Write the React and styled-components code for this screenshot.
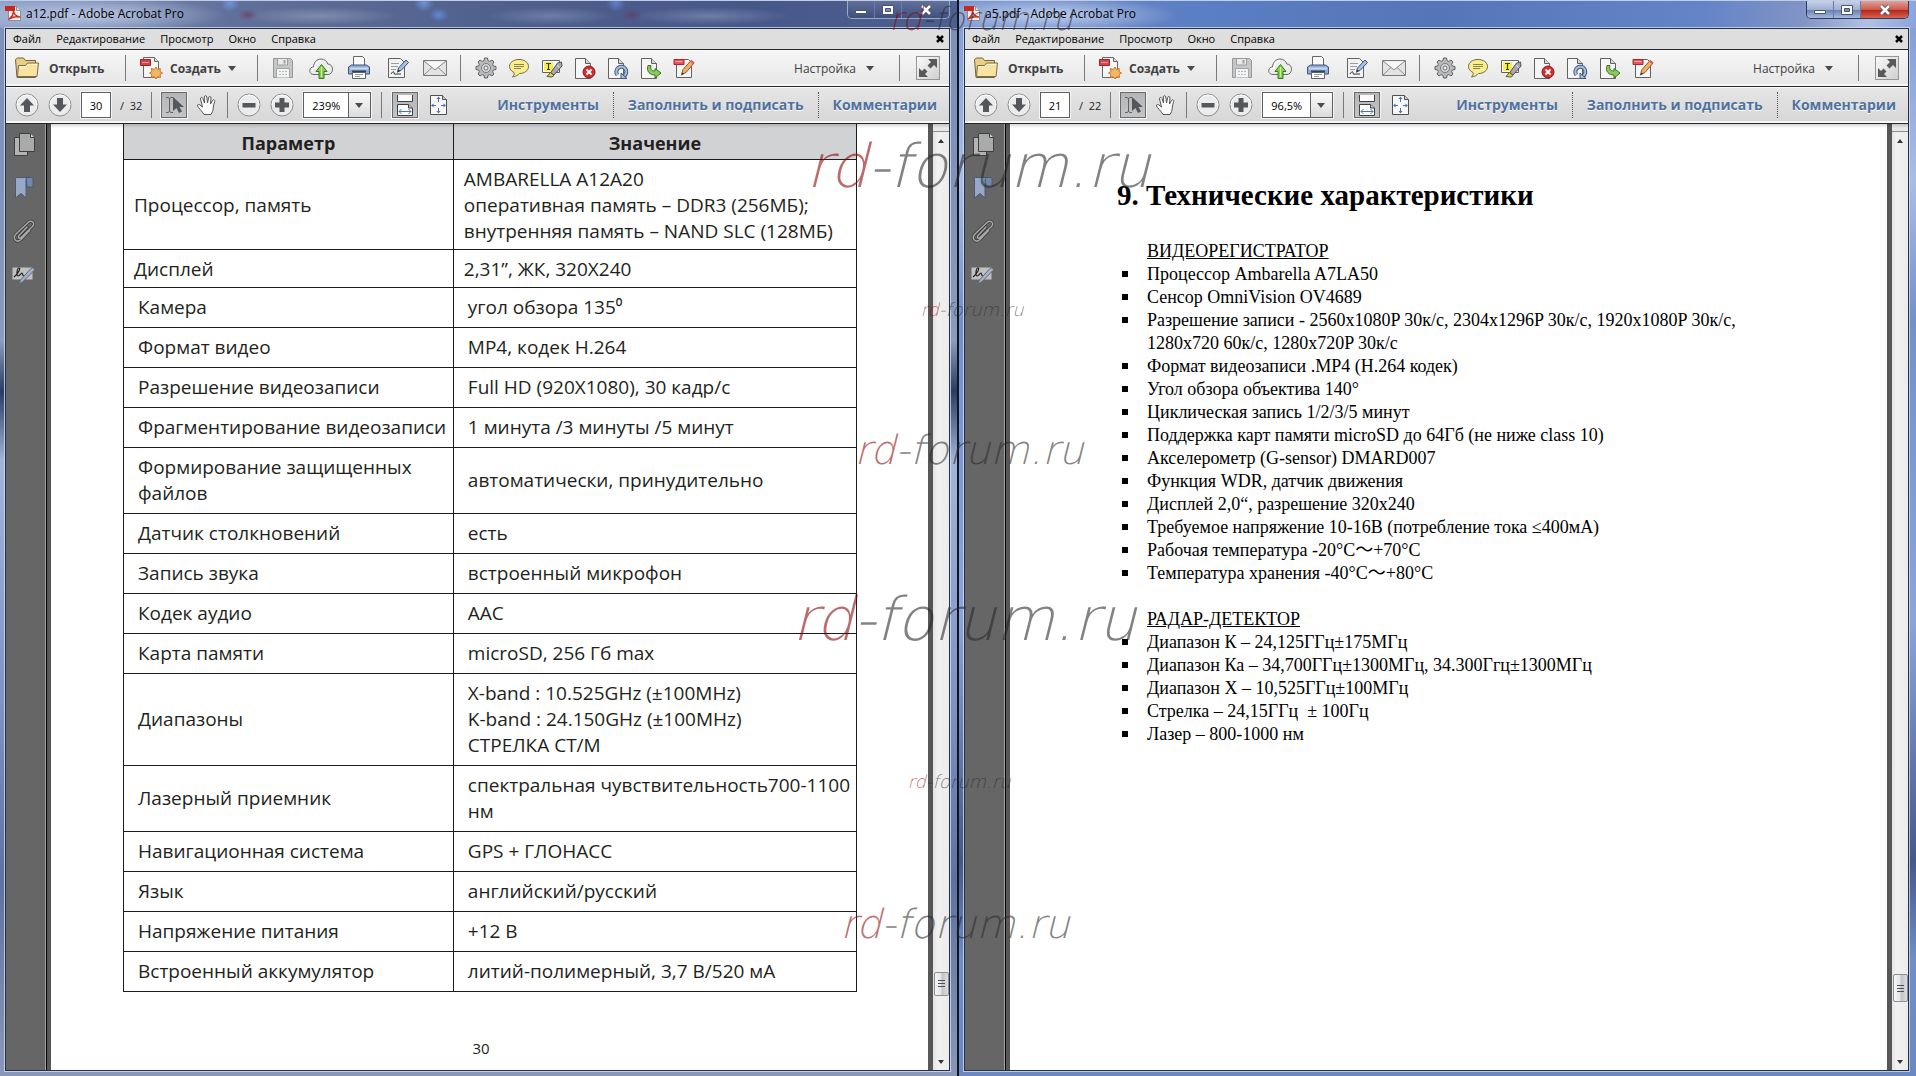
import React, { useState } from "react";
import styled, { createGlobalStyle, css } from "styled-components";

const UI_FONT = `"Open Sans", "Noto Sans", sans-serif`;

const GlobalStyle = createGlobalStyle`
  * {
    box-sizing: border-box;
  }

  body {
    margin: 0;
    background: #14141f;
    font-family: ${UI_FONT};
  }

  button, input, select {
    font-family: inherit;
    margin: 0;
  }

  svg {
    display: block;
    flex: none;
  }
`;

const Desktop = styled.div`
  position: relative;
  display: flex;
  gap: 2px;
  min-height: 100vh;
  overflow: hidden;
  background: #14141f;
`;

const Window = styled.section`
  flex: 1;
  min-width: 0;
  display: flex;
  flex-direction: column;
  padding: 0 7px 5px 5px;
  border-top: 1px solid #c3cde2;
  background: ${({ $active }) =>
    $active
      ? "linear-gradient(#7e9ad6 0, #a9bde4 180px, #7390cc 320px, #8aa5dc 620px, #46588a 860px, #6f8fcb 960px, #6a88c2)"
      : "linear-gradient(#7f90b8 0, #8192ba 180px, #8b9bbb 340px, #2b3c64 390px, #a3b4da 460px, #7e93c4 700px, #5f719f 880px, #8a97b8)"};
`;

const TitleBar = styled.header`
  display: flex;
  align-items: center;
  gap: 5px;
  height: 27px;
  margin: 0 -7px 0 -5px;
  padding: 0 7px 2px 5px;
  color: #000;
  background: ${({ $active }) =>
    $active
      ? "radial-gradient(ellipse 130px 18px at 90px 14px, rgba(205, 218, 243, 0.85), rgba(205, 218, 243, 0) 100%), linear-gradient(90deg, #7d97cf, #5d7fc3 22%, #5476b9 50%, #6484c8 78%, #8094c4 88%, #b2c0e2 95%, #8ba4dc)"
      : "radial-gradient(ellipse 140px 18px at 85px 14px, rgba(190, 203, 230, 0.95), rgba(190, 203, 230, 0) 100%), radial-gradient(ellipse 10px 9px at 230px 2px, #6f92dc, transparent), radial-gradient(ellipse 10px 9px at 424px 2px, #6f92dc, transparent), radial-gradient(ellipse 10px 9px at 616px 2px, #5f80c8, transparent), radial-gradient(ellipse 10px 7px at 439px 14px, #5f88d8, transparent), radial-gradient(ellipse 10px 6px at 248px 14px, #6b4a70, transparent), radial-gradient(ellipse 10px 6px at 632px 14px, #5f4470, transparent), radial-gradient(ellipse 80px 9px at 318px 15px, #7f8cab, transparent), radial-gradient(ellipse 64px 9px at 550px 15px, #6e7ea8, transparent), radial-gradient(ellipse 80px 9px at 710px 15px, #6e7ea8, transparent), linear-gradient(90deg, #8da0c8, #61709a 24%, #4e5f8c 55%, #46578a 78%, #4d5f8f)"};
`;

const Title = styled.h1`
  flex: 1;
  margin: 0;
  font-size: 12px;
  font-weight: 400;
  line-height: 16px;
`;

const Caption = styled.div`
  display: flex;
  align-self: flex-start;
  height: 18px;
  border: 1px solid ${({ $active }) => ($active ? "#2f3c5f" : "#9aa8c8")};
  border-top: 0;
  border-radius: 0 0 5px 5px;
  overflow: hidden;
`;

const CaptionButton = styled.button`
  display: flex;
  align-items: center;
  justify-content: center;
  width: ${({ $wide }) => ($wide ? "47px" : "27px")};
  padding: 0;
  border: 0;
  border-right: ${({ $wide }) => ($wide ? "0" : "1px solid #6b7aa0")};
  background: ${({ $active, $wide }) =>
    (!$active && "linear-gradient(rgba(255,255,255,.12), rgba(20,30,60,.2))") ||
    ($wide && "linear-gradient(#e0a29a, #cf5a4c 50%, #b3281c 55%, #d9644f)") ||
    "linear-gradient(#c6d1e8, #9fafd3 50%, #6c83b5 55%, #a5b8de)"};
`;

const Frame = styled.div`
  flex: 1;
  display: flex;
  flex-direction: column;
  border: 1px solid #262f4a;
  box-shadow: 0 0 0 1px rgba(214, 226, 246, 0.75);
`;

const MenuBar = styled.nav`
  display: flex;
  align-items: center;
  gap: 15px;
  height: 21px;
  padding: 0 5px 0 7px;
  background: #dedede;
  border-bottom: 1px solid #26282b;
`;

const MenuItem = styled.button`
  padding: 0;
  border: 0;
  background: none;
  color: #000;
  font-size: 11px;
  line-height: 18px;
`;

const CloseDocument = styled(MenuItem)`
  margin-left: auto;
`;

const Toolbar = styled.div`
  display: flex;
  align-items: center;
  gap: ${({ $gap }) => $gap || "0"};
  height: 37px;
  padding: 0 9px;
  color: #3d3d3d;
  border-bottom: 1px solid #26282b;
  background: ${({ $dark }) =>
    $dark
      ? "linear-gradient(#e6e6e6, #d6d6d6)"
      : "linear-gradient(#f6f6f6, #e6e6e6)"};
  box-shadow: inset 0 -2px 0 #f7f7f7, inset 0 1px 0 #fafafa;
`;

const IconGroup = styled.div`
  display: flex;
  gap: ${({ $gap }) => $gap};
`;

const IconButton = styled.button`
  display: flex;
  align-items: center;
  justify-content: center;
  flex: none;
  width: ${({ $width }) => $width || "24px"};
  height: 26px;
  padding: 0;
  border: 0;
  background: none;
  ${({ $pressed }) =>
    $pressed &&
    css`
      width: 26px;
      border: 1px solid #67696b;
      background: linear-gradient(#b4b5b7, #c4c5c7);
      box-shadow: 0 0 0 1px #f4f4f4;
    `}
  ${({ $boxed }) =>
    $boxed &&
    css`
      height: 24px;
      border: 1px solid #969696;
      background: linear-gradient(135deg, #fafafa, #cfcfcf);
    `}
`;

const TextButton = styled.button`
  display: flex;
  align-items: center;
  gap: ${({ $gap }) => $gap || "8px"};
  min-width: ${({ $width }) => $width || "auto"};
  height: 26px;
  padding: 0;
  border: 0;
  background: none;
  color: #404040;
  font-size: 12px;
  font-weight: ${({ $bold }) => ($bold ? 700 : 400)};
`;

const Separator = styled.span`
  flex: none;
  width: 1px;
  height: 26px;
  margin: 0 ${({ $space }) => $space || "13px"};
  background: #77797b;
`;

const Spacer = styled.span`
  flex: 1;
`;

const PageInput = styled.input`
  width: 30px;
  height: 26px;
  padding: 0;
  border: 1px solid #5d6063;
  background: #fff;
  box-shadow: 0 0 0 1px #f4f4f4;
  color: #000;
  font-size: 11px;
  text-align: center;
`;

const PageCount = styled.span`
  color: #222;
  font-size: 11px;
  white-space: pre;
`;

const ZoomField = styled.span`
  position: relative;
  display: flex;
  border: 1px solid #5d6063;
  box-shadow: 0 0 0 1px #f4f4f4;
  background: linear-gradient(#fafafa, #dcdcdc);

  svg {
    position: absolute;
    right: 7px;
    top: 10px;
    pointer-events: none;
  }
`;

const ZoomSelect = styled.select`
  appearance: none;
  height: 24px;
  padding: 0 30px 0 8px;
  border: 0;
  border-radius: 0;
  background: linear-gradient(#5d6063, #5d6063) right 21px top 0 / 1px 100%
      no-repeat,
    linear-gradient(90deg, #fff, #fff) left / calc(100% - 21px) 100% no-repeat;
  color: #000;
  font-size: 11px;
`;

const Panes = styled.div`
  display: flex;
  align-items: center;
  margin-left: auto;
`;

const PaneLink = styled.a`
  padding: 3px 14px;
  line-height: 20px;
  color: #4f71a0;
  font-size: 14px;
  font-weight: 700;
  text-decoration: none;
  white-space: nowrap;
  text-shadow: 0 1px 0 #fff;
  border-left: 1px dotted #555;

  &:first-child {
    border-left: 0;
  }

  &:last-child {
    padding-right: 3px;
  }
`;

const Workspace = styled.div`
  position: relative;
  flex: 1;
  display: flex;

  &::before {
    content: "";
    position: absolute;
    inset: 0 0 auto 40px;
    height: 4px;
    background: linear-gradient(rgba(0, 0, 0, 0.16), rgba(0, 0, 0, 0));
  }
`;

const SidePanel = styled.aside`
  display: flex;
  flex-direction: column;
  gap: 19px;
  width: 41px;
  padding: 9px 0 0 6px;
  background: #666;
  border-right: 1px solid #000;
  box-shadow: inset -1px 0 0 #a3a3a3;

  button {
    height: 24px;
  }
`;

const PageArea = styled.main`
  flex: 1;
  display: flex;
  padding: 0 5px 0 4px;
  background: #575757;
`;

const Page = styled.article`
  flex: 1;
  background: #fff;
`;

const ManualPage = styled(Page)`
  padding: 0 71px 0 72px;
`;

const SpecTable = styled.table`
  width: 100%;
  table-layout: fixed;
  border-collapse: collapse;
  color: #231f20;
  font-family: ${UI_FONT};
  font-size: 19px;
  line-height: 26px;

  th,
  td {
    border: 1px solid #1c1c1e;
    text-align: left;
    font-weight: 400;
    white-space: pre-line;
  }

  col:first-child {
    width: 45%;
  }

  thead th {
    padding: 6px 0 3px;
    border-top: 0;
    background: #d1d2d4;
    font-size: 18px;
    text-align: center;
    font-weight: 700;
  }
`;

const SpecRow = styled.tr`
  th,
  td {
    padding: ${({ $tight }) => ($tight ? "6px 0 5px 10px" : "6px 0 7px 14px")};
  }
`;

const PageNumber = styled.p`
  margin: 46px 18px 0 0;
  color: #231f20;
  font-size: 15px;
  line-height: 20px;
  text-align: center;
`;

const FeaturesPage = styled(Page)`
  padding: 55px 40px 0 107px;
  color: #000;
  font-family: "Liberation Serif", "Noto Sans CJK SC", serif;
  font-size: 18px;
  line-height: 23px;
`;

const ChapterTitle = styled.h2`
  margin: 0 0 29px;
  font-size: 29px;
  line-height: 32px;
`;

const SectionTitle = styled.h3`
  margin: 0 0 0 30px;
  font-size: 18px;
  font-weight: 400;
  text-decoration: underline;
`;

const FeatureList = styled.ul`
  margin: 0 0 23px;
  padding: 0;
  list-style: none;

  li {
    display: flex;
    gap: 19px;
    padding-left: 5px;
    white-space: pre-line;
  }

  li::before {
    content: "";
    flex: none;
    width: 6px;
    height: 6px;
    margin-top: 8px;
    background: #000;
  }
`;

const Scrollbar = styled.div`
  display: flex;
  flex-direction: column;
  align-items: center;
  width: 16px;
  background: linear-gradient(90deg, #e3e3e3, #f1f1f1 30%, #ebebeb);
`;

const SplitHandle = styled.span`
  align-self: stretch;
  height: 8px;
  margin-bottom: 1px;
  background: #e8e8e8;
  border-bottom: 1px solid #8e8e8e;
`;

const ScrollButton = styled.button`
  display: flex;
  align-items: center;
  justify-content: center;
  width: 16px;
  height: 16px;
  padding: 0;
  border: 0;
  background: none;
`;

const Track = styled.span`
  flex: ${({ $grow }) => $grow};
`;

const Thumb = styled.span`
  display: flex;
  align-items: center;
  justify-content: center;
  width: 15px;
  height: ${({ $size }) => $size};
  border: 1px solid #8b8d90;
  border-radius: 2px;
  background: linear-gradient(90deg, #f7f7f7, #e4e5e6 45%, #c2c4c8 55%, #dcdde0);
`;

const Watermark = styled.span`
  position: absolute;
  left: calc(50% + ${({ $shift }) => $shift});
  top: ${({ $top }) => $top};
  transform: translateX(-50%);
  color: rgba(40, 40, 42, 0.58);
  font-family: "DejaVu Sans Light", "DejaVu Sans", sans-serif;
  font-size: ${({ $size }) => $size};
  font-style: italic;
  line-height: 1.2;
  white-space: nowrap;
  pointer-events: none;

  em {
    color: rgba(140, 0, 0, 0.58);
  }
`;

const Icon = ({ w = 24, h = 24, children }) => (
  <svg
    width={w}
    height={h}
    viewBox={`0 0 ${w} ${h}`}
    fill="none"
    strokeLinejoin="round"
    aria-hidden="true"
  >
    {children}
  </svg>
);

const Caret = () => (
  <Icon w={8} h={5}>
    <path d="M0 0h8L4 5z" fill="#4a4a4a" />
  </Icon>
);

const PdfLogo = () => (
  <Icon w={16} h={17}>
    <path d="M3.5 1.5h8l4 4v10h-12z" fill="#f4f1f0" stroke="#8d8d8d" />
    <path d="M11.500 1.500v4h4" fill="#ddd" stroke="#8d8d8d" />
    <path d="M0 1h10v5H0z" fill="#c9281f" />
    <path
      d="M4 14c3-2 4.500-5 4.500-8 .5 3 2 5 6 6-3-.6-7 0-10.500 2z"
      stroke="#cf2a20"
      strokeWidth="1.500"
    />
  </Icon>
);

const FolderIcon = () => (
  <Icon>
    <path d="M.5 3.500l2-1.500h6l2 2.500h10v17H2z" fill="#e9cf83" stroke="#6f6448" />
    <path d="M2.500 20.500l1-11h7l2-2.500h11l-1.500 13.500z" fill="#f8e3a3" stroke="#7b6d49" />
    <path d="M4.500 11h6.500l2-2.500h9" stroke="#fff5cf" />
  </Icon>
);

const CreateIcon = () => (
  <Icon>
    <path d="M4.500 1.500h11l4 4v16h-15z" fill="#f7f7f7" stroke="#666" />
    <path d="M15.500 1.500v4h4" fill="#ddd" stroke="#666" />
    <path d="M1.500 3.500h10v6h-10z" fill="#d8434a" stroke="#a32029" />
    <path d="M3 6.500h7" stroke="#ec9498" />
    <path
      d="M17 11l1.500 2.500 2.800-1-.3 3 2.500 1.500-2.500 1.500.5 3-3-.7L17 23l-1.700-2.300-3 .8.6-3-2.400-1.500 2.500-1.500-.7-3 3 .9z"
      fill="#f5b566"
      stroke="#c17a2c"
    />
  </Icon>
);

const SaveIcon = () => (
  <Icon>
    <path d="M2.500 2.500h17l2 2v17h-19z" fill="#c5c6c8" stroke="#97989a" />
    <path d="M6.500 3v6h10V3" fill="#e9e9ea" stroke="#9c9d9f" />
    <path d="M12.500 4h2v3.500h-2z" fill="#a2a3a5" />
    <path d="M5.500 21.500v-9h13v9" fill="#f3f3f3" stroke="#a5a6a8" />
    <path d="M8 15.500h8M8 18.500h8" stroke="#b9babc" strokeDasharray="2 1" />
  </Icon>
);

const CloudIcon = () => (
  <Icon>
    <path
      d="M5 18.500C1.500 18.500.5 16 .8 14c.3-2 2-3.200 3.700-3C4.500 6.500 8 3 12 3c3.500 0 6 2.200 6.800 5 3 0 4.700 2.500 4.700 5.200 0 3-2 5.300-4.500 5.300z"
      fill="#ececec"
      stroke="#68696b"
    />
    <path d="M3 15c0-2 1-3 3-2.500C6 8 9 5 12 5" stroke="#fff" strokeWidth="1.500" />
    <path d="M12.500 8.500l5.500 7h-3v7H10v-7H7z" fill="#8bd14c" stroke="#38761d" />
    <path d="M12.500 11v10" stroke="#c8f09e" />
  </Icon>
);

const PrinterIcon = () => (
  <Icon>
    <path d="M6.500 9.500v-9h9l2 2v7" fill="#fafafa" stroke="#666" />
    <path d="M1.500 11l3-2h15l3 2v7h-21z" fill="#8fa9d2" stroke="#3f577f" />
    <path d="M3 12.500h18" stroke="#c9d8ef" strokeWidth="2" />
    <path d="M5 15.500h14" stroke="#2f4263" strokeWidth="2" />
    <path d="M5.500 16.500h13v6h-13z" fill="#fff" stroke="#5d6063" />
    <path d="M8 18.500h8M8 20.500h5" stroke="#9a9b9d" />
  </Icon>
);

const SignIcon = () => (
  <Icon>
    <path d="M3.500 2.500h12l4 4v15h-16z" fill="#f2f2f2" stroke="#5f6163" />
    <path d="M6 7.500h8M6 10.500h7M6 13.500h5" stroke="#9a9b9d" />
    <path d="M6 18c2-3 3-3 3-1s2 1 3 1h4" stroke="#333" />
    <path d="M12.500 15.500l1-3.500 7.500-8 2.500 2.500-7.500 8z" fill="#a8c0e3" stroke="#3a5078" />
    <path d="M12 17l1.500-3.500 1.500 1.500z" fill="#333" />
  </Icon>
);

const MailIcon = () => (
  <Icon>
    <path d="M.5 4.500h23v15H.5z" fill="#e4e4e5" stroke="#77787a" />
    <path d="M2.500 5.500h19L12 13z" fill="#f7f7f7" />
    <path d="M1 5l11 9 11-9M1 19l8-7.500M23 19l-8-7.500" stroke="#8a8b8d" />
  </Icon>
);

const GearIcon = () => (
  <Icon>
    <path
      d="M10.500 3h3l.5 2.600 1.800.8L18 5l2 2-1.400 2.200.8 1.800 2.600.5v3l-2.600.5-.8 1.800L20 19l-2 2-2.200-1.400-1.800.8-.5 2.600h-3l-.5-2.600-1.800-.8L6 21l-2-2 1.400-2.200-.8-1.800L2 14.500v-3l2.600-.5.8-1.800L4 7l2-2 2.200 1.400 1.800-.8z"
      fill="#b9babc"
      stroke="#5f6163"
      transform="translate(0 -1)"
    />
    <circle cx="12" cy="12" r="4.500" fill="#d9dadb" stroke="#77787a" />
    <circle cx="12" cy="12" r="2" fill="#f4f4f4" stroke="#6a6b6d" />
  </Icon>
);

const CommentIcon = () => (
  <Icon>
    <path
      d="M12 3.500c5.500 0 9.500 3 9.500 7s-4 7-9 7c-1.500 1.500-3.500 3-7 3.500 1.500-1.500 2-3 1.500-4.500-2.700-1.200-4.500-3.500-4.500-6 0-4 4-7 9.500-7z"
      fill="#fbec8c"
      stroke="#6f6b4c"
    />
    <path d="M7 8.500h10M7 10.500h10M7 12.500h7" stroke="#8b8350" />
  </Icon>
);

const HighlightIcon = () => (
  <Icon>
    <path d="M2.500 4.500h17v12h-17z" fill="#fff" stroke="#5f6163" />
    <path d="M4 6h9v9H4z" fill="#f8ee4e" />
    <path d="M6 7.500h5M8.500 7.500v6M7 13.500h3" stroke="#3c3c20" strokeWidth="1.200" />
    <path d="M10.500 17l7-10 4-1 .5 4-8 9z" fill="#a7a9ac" stroke="#4d4f51" />
    <path d="M17 9.500l2.500 2" stroke="#e3e3e3" />
    <path d="M7 20.500l3.500-4 3.500 3-2 1.500z" fill="#e5d64b" stroke="#5c5626" />
  </Icon>
);

const BlankPage = () => (
  <g transform="translate(-1 1)">
    <path d="M3.500 1.500h10l5 5v15h-15z" fill="#f6f6f6" stroke="#5f6163" />
    <path d="M13.500 1.500v5h5" fill="#d5d6d8" stroke="#5f6163" />
  </g>
);

const DeletePageIcon = () => (
  <Icon>
    <BlankPage />
    <circle cx="16" cy="16" r="6" fill="#cf2f2f" stroke="#8e1717" />
    <path d="M13.500 13.500l5 5M18.500 13.500l-5 5" stroke="#fff" strokeWidth="1.800" />
  </Icon>
);

const RotatePageIcon = () => (
  <Icon>
    <BlankPage />
    <path d="M11.500 19a5 5 0 1 1 6.500 1" stroke="#41577c" strokeWidth="4" />
    <path d="M11.500 19a5 5 0 1 1 6.500 1" stroke="#a9bfdf" strokeWidth="2" />
    <path d="M15 17v5.500h6z" fill="#a9bfdf" stroke="#41577c" />
  </Icon>
);

const ExtractPageIcon = () => (
  <Icon>
    <BlankPage />
    <path
      d="M9 9.500c-2 6 2 9.500 7 9.500v3l6-5-6-4.500V15c-3.500 0-5-1.500-4-5.500z"
      fill="#8ccb58"
      stroke="#3b7420"
    />
  </Icon>
);

const EditPdfIcon = () => (
  <Icon>
    <path d="M4.500 3.500h12l3 3v15h-15z" fill="#f6f6f6" stroke="#5f6163" />
    <path d="M2 3.500h10v5H2z" fill="#e0585c" stroke="#b0262c" />
    <path d="M3.500 5.500h7" stroke="#f2a5a7" />
    <path d="M9.500 18.500l1.500-5 8-9 3 2.500-8 9.500z" fill="#f3ad6b" stroke="#8a5a2b" />
    <path d="M18 5.500l3 2.500 1.500-1.500-3-2.500z" fill="#e4555b" />
    <path d="M9 19.500l1.500-3 1.500 1.500z" fill="#333" />
  </Icon>
);

const ExpandIcon = () => (
  <Icon w={22} h={22}>
    <path d="M11 2h9v9l-3-3-3.500 3.500-3-3L14 5z" fill="#58595b" />
    <path d="M11 20H2v-9l3 3 2.500-2.500 3 3L8 17z" fill="#58595b" />
  </Icon>
);

const circleGlyphs = {
  up: <path d="M12 5l7 7.500h-4V19H9v-6.500H5z" fill="#55585b" />,
  down: <path d="M12 19l7-7.500h-4V5H9v6.500H5z" fill="#55585b" />,
  minus: <path d="M5.500 10h13v4.500h-13z" fill="#55585b" />,
  plus: (
    <path d="M9.500 5h5v4.500H19v5h-4.500V19h-5v-4.500H5v-5h4.500z" fill="#55585b" />
  ),
};

const CircleIcon = ({ name }) => (
  <Icon>
    <circle cx="12" cy="12" r="11" fill="#ececec" stroke="#8a8c8e" />
    <path d="M2 12a10 10 0 0 1 20 0" stroke="#fff" />
    {circleGlyphs[name]}
  </Icon>
);

const SelectIcon = () => (
  <Icon>
    <path d="M4 4.500h2l1.500 1 1.500-1h2M4 19.500h2l1.500-1 1.500 1h2M7.500 5v14" stroke="#5f6265" />
    <path d="M11 4v14l3.500-3 2.500 5 3-1.500-2.500-4.500h4.500z" fill="#55585b" />
  </Icon>
);

const HandIcon = () => (
  <Icon w={22} h={24}>
    <path
      d="M8 21.500C6 18 2.500 15 1.500 13c-.5-1.500 1.500-2 2.500-1l2.500 2-2-8c-.3-1.700 1.800-2.200 2.400-.6L8.500 10 8.300 4c0-1.800 2.200-1.800 2.500 0l.7 6 1.200-5.500c.4-1.600 2.400-1.200 2.300.5L14.500 11l2-3.500c.8-1.500 2.700-.6 2.200 1-.7 2.500-1.400 4-1.500 6.500 0 3-1.200 4.500-2.200 6.500z"
      fill="#fbfbfb"
      stroke="#55585b"
    />
  </Icon>
);

const ScrollModeIcon = () => (
  <Icon>
    <path d="M4.500 2v6.500h15V2" fill="#fbfbfb" stroke="#3f4143" />
    <path d="M4.500 22.500v-11h11l4 3.500v7.500z" fill="#fbfbfb" stroke="#3f4143" />
    <path d="M15.500 11.500V15h4" fill="#ccc" stroke="#3f4143" />
    <path d="M6 18.500h12M8.500 16l-2.500 2.500L8.500 21M15.500 16l2.500 2.500-2.500 2.500" stroke="#4b74b8" />
  </Icon>
);

const FitPageIcon = () => (
  <Icon w={22} h={24}>
    <path d="M3.500 2.500h12l4 4v15h-16z" fill="#f7f7f7" stroke="#4d4f51" />
    <path d="M15.500 2.500v4h4" fill="#ccc" stroke="#4d4f51" />
    <path d="M11.500 4v5M11.500 15v5M5 12.500h4M14 12.500h4" stroke="#4b74b8" />
    <path
      d="M9.500 6l2-2.500 2 2.500zM9.500 18l2 2.500 2-2.500zM6.500 10.500L4 12.500l2.500 2zM16.500 10.500l2.500 2-2.500 2z"
      fill="#4b74b8"
    />
  </Icon>
);

const PagesIcon = () => (
  <Icon>
    <path d="M2.500 4.500h13v18h-13z" fill="#b4b4b4" stroke="#3f3f3f" />
    <path d="M7.500.5h11l4 4v14h-15z" fill="#a9aaaa" stroke="#3f3f3f" />
    <path d="M18.500.5v4h4" fill="#d5d5d5" stroke="#3f3f3f" />
  </Icon>
);

const BookmarkIcon = () => (
  <Icon>
    <path d="M14 1.500h5.500c1 0 1.500.5 1.500 1.500v8h-6z" fill="#7389ab" stroke="#4a5870" />
    <path d="M3.500 2.500c0-1 .5-1 1.500-1h11c-1.500 0-2 1-2 2.500V22l-5-4.500L3.500 22z" fill="#96a9c8" stroke="#4a5870" />
  </Icon>
);

const clipPath =
  "M15 8l-8 8.500c-1.500 2 .5 3.500 2 2L20.500 7.500c3-3.500-1-7-4.500-4L4 15c-4 4.500.5 9.500 5 5.500l8.500-9";

const ClipIcon = () => (
  <Icon>
    <path d={clipPath} stroke="#3a3a3a" strokeWidth="3" strokeLinecap="round" />
    <path d={clipPath} stroke="#a9a9a9" strokeWidth="1.500" strokeLinecap="round" />
  </Icon>
);

const SignaturesIcon = () => (
  <Icon>
    <path d="M.5 5.500h20v12H.5z" fill="#c0c1c1" />
    <path d="M2 15c4-3 7-9 5-9s-3 8-1 8 3-3 4-3 0 3 2 3" stroke="#222" strokeWidth="1.200" />
    <path d="M7 22l1.500-4L19 6.500c2.500-1 4 0 3 2L11 19.500z" fill="#a7b4c8" stroke="#5c6778" />
  </Icon>
);

const MENU = ["Файл", "Редактирование", "Просмотр", "Окно", "Справка"];

const FILE_TOOLS = [
  ["Сохранить", SaveIcon],
  ["Загрузить", CloudIcon],
  ["Печать", PrinterIcon],
  ["Подписать", SignIcon],
  ["Отправить", MailIcon],
];

const EDIT_TOOLS = [
  ["Параметры", GearIcon],
  ["Комментарий", CommentIcon],
  ["Выделить текст", HighlightIcon],
  ["Удалить страницы", DeletePageIcon],
  ["Повернуть страницы", RotatePageIcon],
  ["Извлечь страницы", ExtractPageIcon],
  ["Редактировать", EditPdfIcon],
];

const SIDE_TOOLS = [
  ["Миниатюры", PagesIcon],
  ["Закладки", BookmarkIcon],
  ["Вложения", ClipIcon],
  ["Подписи", SignaturesIcon],
];

const SPECS = [
  [
    "Процессор, память",
    "AMBARELLA A12A20\nоперативная память – DDR3 (256МБ);\nвнутренняя память – NAND SLC (128МБ)",
  ],
  ["Дисплей", "2,31”, ЖК, 320Х240"],
  ["Камера", "угол обзора 135⁰"],
  ["Формат видео", "МР4, кодек Н.264"],
  ["Разрешение видеозаписи", "Full HD (920Х1080), 30 кадр/с"],
  ["Фрагментирование видеозаписи", "1 минута /3 минуты /5 минут"],
  ["Формирование защищенных\nфайлов", "автоматически, принудительно"],
  ["Датчик столкновений", "есть"],
  ["Запись звука", "встроенный микрофон"],
  ["Кодек аудио", "ААС"],
  ["Карта памяти", "microSD, 256 Гб max"],
  [
    "Диапазоны",
    "X-band : 10.525GHz (±100MHz)\nK-band : 24.150GHz (±100MHz)\nСТРЕЛКА СТ/М",
  ],
  ["Лазерный приемник", "спектральная чувствительность700-1100\nнм"],
  ["Навигационная система", "GPS + ГЛОНАСС"],
  ["Язык", "английский/русский"],
  ["Напряжение питания", "+12 В"],
  ["Встроенный аккумулятор", "литий-полимерный, 3,7 В/520 мА"],
];

const RECORDER = [
  "Процессор Ambarella A7LA50",
  "Сенсор OmniVision OV4689",
  "Разрешение записи - 2560x1080P 30к/с, 2304x1296P 30к/с, 1920x1080P 30к/с,\n1280x720 60к/с, 1280x720P 30к/с",
  "Формат видеозаписи .MP4 (H.264 кодек)",
  "Угол обзора объектива 140°",
  "Циклическая запись 1/2/3/5 минут",
  "Поддержка карт памяти microSD до 64Гб (не ниже class 10)",
  "Акселерометр (G-sensor) DMARD007",
  "Функция WDR, датчик движения",
  "Дисплей 2,0“, разрешение 320x240",
  "Требуемое напряжение 10-16В (потребление тока ≤400мА)",
  "Рабочая температура -20°C～+70°C",
  "Температура хранения -40°C～+80°C",
];

const RADAR = [
  "Диапазон К – 24,125ГГц±175МГц",
  "Диапазон Ка – 34,700ГГц±1300МГц, 34.300Ггц±1300МГц",
  "Диапазон Х – 10,525ГГц±100МГц",
  "Стрелка – 24,15ГГц \u00a0±\u00a0100Гц",
  "Лазер – 800-1000 нм",
];

const WATERMARKS = [
  { shift: "23px", top: "0px", size: "32px" },
  { shift: "20px", top: "130px", size: "60px" },
  { shift: "14px", top: "299px", size: "18px" },
  { shift: "11px", top: "426px", size: "40px" },
  { shift: "6px", top: "583px", size: "60px" },
  { shift: "1px", top: "771px", size: "18px" },
  { shift: "-3px", top: "900px", size: "40px" },
];

const toolButtons = (tools) =>
  tools.map(([label, Glyph]) => (
    <IconButton key={label} aria-label={label}>
      <Glyph />
    </IconButton>
  ));

const AcrobatWindow = ({ file, page, pages, zoom, active, thumb, children }) => {
  const [current, setCurrent] = useState(page);

  return (
    <Window $active={active}>
      <TitleBar $active={active}>
        <PdfLogo />
        <Title>{file} - Adobe Acrobat Pro</Title>
        <Caption $active={active}>
          <CaptionButton $active={active} aria-label="Свернуть">
            <Icon w={14} h={12}>
              <path d="M1.500 6.500h11v3h-11z" fill="#fff" stroke="#4a5470" />
            </Icon>
          </CaptionButton>
          <CaptionButton $active={active} aria-label="Развернуть">
            <Icon w={14} h={12}>
              <path d="M1.500 1.500h11v9h-11z" fill="#fff" stroke="#4a5470" />
              <path d="M4.500 4.500h5v3h-5z" fill="#7d8fb8" stroke="#4a5470" />
            </Icon>
          </CaptionButton>
          <CaptionButton $active={active} $wide aria-label="Закрыть">
            <Icon w={14} h={12}>
              <path d="M3 2l8 8M11 2l-8 8" stroke="#4a4a5a" strokeWidth="4" />
              <path d="M3 2l8 8M11 2l-8 8" stroke="#fff" strokeWidth="2.500" />
            </Icon>
          </CaptionButton>
        </Caption>
      </TitleBar>
      <Frame>
        <MenuBar>
          {MENU.map((item) => (
            <MenuItem key={item}>{item}</MenuItem>
          ))}
          <CloseDocument aria-label="Закрыть документ">
            <Icon w={8} h={8}>
              <path d="M1 1l6 6M7 1L1 7" stroke="#000" strokeWidth="2.500" />
            </Icon>
          </CloseDocument>
        </MenuBar>
        <Toolbar>
          <TextButton $bold $gap="10px" $width="95px">
            <FolderIcon />
            Открыть
          </TextButton>
          <Separator $space="13px 0 15px" />
          <TextButton $bold $gap="7px" $width="105px">
            <CreateIcon />
            Создать
            <Caret />
          </TextButton>
          <Separator />
          <IconGroup $gap="14px">{toolButtons(FILE_TOOLS)}</IconGroup>
          <Separator />
          <IconGroup $gap="9px">{toolButtons(EDIT_TOOLS)}</IconGroup>
          <Spacer />
          <TextButton $gap="10px">
            Настройка
            <Caret />
          </TextButton>
          <Separator $space="16px 0 25px" />
          <IconButton $boxed aria-label="Режим чтения">
            <ExpandIcon />
          </IconButton>
        </Toolbar>
        <Toolbar $dark $gap="9px">
          <IconButton aria-label="Предыдущая страница">
            <CircleIcon name="up" />
          </IconButton>
          <IconButton aria-label="Следующая страница">
            <CircleIcon name="down" />
          </IconButton>
          <PageInput
            aria-label="Номер страницы"
            value={current}
            onChange={(e) => setCurrent(e.target.value)}
          />
          <PageCount>{`/  ${pages}`}</PageCount>
          <Separator $space="0" />
          <IconButton $pressed aria-label="Выделение">
            <SelectIcon />
          </IconButton>
          <IconButton $width="22px" aria-label="Рука">
            <HandIcon />
          </IconButton>
          <Separator $space="0" />
          <IconButton aria-label="Уменьшить">
            <CircleIcon name="minus" />
          </IconButton>
          <IconButton aria-label="Увеличить">
            <CircleIcon name="plus" />
          </IconButton>
          <ZoomField>
            <ZoomSelect aria-label="Масштаб" defaultValue={zoom}>
              <option>{zoom}</option>
            </ZoomSelect>
            <Caret />
          </ZoomField>
          <Separator $space="1px" />
          <IconButton $pressed aria-label="Прокрутка">
            <ScrollModeIcon />
          </IconButton>
          <IconButton $width="22px" aria-label="Вся страница">
            <FitPageIcon />
          </IconButton>
          <Panes>
            <PaneLink href="#tools">Инструменты</PaneLink>
            <PaneLink href="#sign">Заполнить и подписать</PaneLink>
            <PaneLink href="#comments">Комментарии</PaneLink>
          </Panes>
        </Toolbar>
        <Workspace>
          <SidePanel>{toolButtons(SIDE_TOOLS)}</SidePanel>
          <PageArea>{children}</PageArea>
          <Scrollbar>
            <SplitHandle />
            <ScrollButton aria-label="Вверх">
              <Icon w={6} h={4}>
                <path d="M0 4l3-4 3 4z" fill="#333" />
              </Icon>
            </ScrollButton>
            <Track $grow={thumb.before} />
            <Thumb $size={thumb.size}>
              <Icon w={7} h={9}>
                <path d="M0 1.500h7M0 4.500h7M0 7.500h7" stroke="#4d4f51" />
              </Icon>
            </Thumb>
            <Track $grow={thumb.after} />
            <ScrollButton aria-label="Вниз">
              <Icon w={6} h={4}>
                <path d="M0 0l3 4 3-4z" fill="#333" />
              </Icon>
            </ScrollButton>
          </Scrollbar>
        </Workspace>
      </Frame>
    </Window>
  );
};

const App = () => (
  <>
    <GlobalStyle />
    <Desktop>
      <AcrobatWindow
        file="a12.pdf"
        page="30"
        pages="32"
        zoom="239%"
        thumb={{ size: "24px", before: 822, after: 58 }}
      >
        <ManualPage>
          <SpecTable>
            <colgroup>
              <col />
              <col />
            </colgroup>
            <thead>
              <tr>
                <th scope="col">Параметр</th>
                <th scope="col">Значение</th>
              </tr>
            </thead>
            <tbody>
              {SPECS.map(([name, value], i) => (
                <SpecRow key={name} $tight={i < 2}>
                  <th scope="row">{name}</th>
                  <td>{value}</td>
                </SpecRow>
              ))}
            </tbody>
          </SpecTable>
          <PageNumber>30</PageNumber>
        </ManualPage>
      </AcrobatWindow>
      <AcrobatWindow
        active
        file="a5.pdf"
        page="21"
        pages="22"
        zoom="96,5%"
        thumb={{ size: "28px", before: 825, after: 52 }}
      >
        <FeaturesPage>
          <ChapterTitle>9. Технические характеристики</ChapterTitle>
          <SectionTitle>ВИДЕОРЕГИСТРАТОР</SectionTitle>
          <FeatureList>
            {RECORDER.map((item) => (
              <li key={item}>{item}</li>
            ))}
          </FeatureList>
          <SectionTitle>РАДАР-ДЕТЕКТОР</SectionTitle>
          <FeatureList>
            {RADAR.map((item) => (
              <li key={item}>{item}</li>
            ))}
          </FeatureList>
        </FeaturesPage>
      </AcrobatWindow>
      {WATERMARKS.map(({ shift, top, size }) => (
        <Watermark key={top} $shift={shift} $top={top} $size={size}>
          <em>rd</em>-forum.ru
        </Watermark>
      ))}
    </Desktop>
  </>
);

export default App;
